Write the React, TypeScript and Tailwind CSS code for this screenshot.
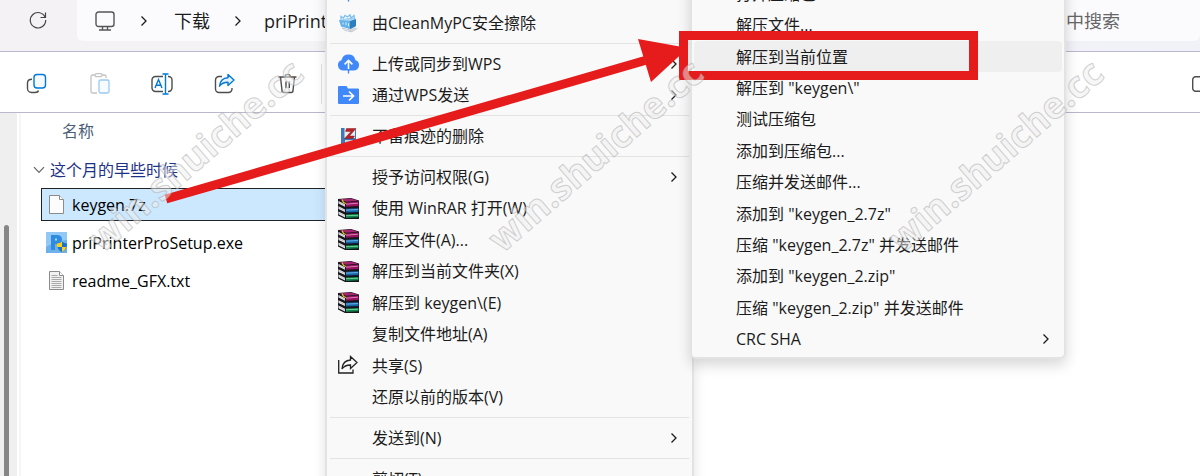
import React from 'react';

type IconName = 'cleaner' | 'cloud' | 'folder' | 'eraser' | 'rar' | 'share';

interface MenuEntry {
  label: string;
  icon?: IconName;
  submenu?: boolean;
}

const MENU_TOP: MenuEntry[] = [
  { label: '上传', icon: 'cloud' },
  { label: '由CleanMyPC安全擦除', icon: 'cleaner' },
];

const MENU_WPS: MenuEntry[] = [
  { label: '上传或同步到WPS', icon: 'cloud', submenu: true },
  { label: '通过WPS发送', icon: 'folder', submenu: true },
];

const MENU_FILE: MenuEntry[] = [
  { label: '授予访问权限(G)', submenu: true },
  { label: '使用 WinRAR 打开(W)', icon: 'rar' },
  { label: '解压文件(A)...', icon: 'rar' },
  { label: '解压到当前文件夹(X)', icon: 'rar' },
  { label: '解压到 keygen\\(E)', icon: 'rar' },
  { label: '复制文件地址(A)' },
  { label: '共享(S)', icon: 'share' },
  { label: '还原以前的版本(V)' },
];

const SUBMENU = [
  '打开压缩包',
  '解压文件...',
  '解压到当前位置',
  '解压到 "keygen\\"',
  '测试压缩包',
  '添加到压缩包...',
  '压缩并发送邮件...',
  '添加到 "keygen_2.7z"',
  '压缩 "keygen_2.7z" 并发送邮件',
  '添加到 "keygen_2.zip"',
  '压缩 "keygen_2.zip" 并发送邮件',
  'CRC SHA',
];

const FILES = [
  { name: 'keygen.7z', kind: 'blank' },
  { name: 'priPrinterProSetup.exe', kind: 'exe' },
  { name: 'readme_GFX.txt', kind: 'txt' },
];

const Chevron: React.FC<{ className?: string }> = ({ className }) => (
  <svg className={className} viewBox="0 0 8 12" fill="none" stroke="currentColor" strokeWidth="1.3">
    <path d="M1.500 1.500 6 6l-4.500 4.500" />
  </svg>
);

const MenuIcon: React.FC<{ name?: IconName }> = ({ name }) => {
  if (name === 'cleaner') {
    return (
      <svg viewBox="0 0 21 21" className="w-[21px] h-[21px]">
        <path d="m7 17 8-3 5 1.500-6 4z" fill="#d3d7da" />
        <path d="M1 7 12 5l6 1v7l-6 3L3 13.500z" fill="#63b1e8" />
        <path d="m12 8 6-2v7l-6 3z" fill="#2a7fc0" />
        <path d="m1 7 11-2 6 1-6 2z" fill="#a9d6f5" />
        <path d="M3 6V3.500L5.500 5 7 2.500 9.500 4 12 2l1 3 3-2.500.500 3.500" stroke="#7cc0ee" strokeWidth="1.400" fill="none" />
        <path d="M5 9.500v2m3-2.300v3m2.500-2v3" stroke="#d7effc" strokeWidth="1" fill="none" />
        <path d="m4 15 7 1.500 2 2-6-1z" fill="#eef2f4" stroke="#9fabb5" strokeWidth=".500" />
      </svg>
    );
  }
  if (name === 'cloud') {
    return (
      <svg viewBox="0 0 21 21" className="w-[21px] h-[21px]">
        <path d="M5.500 17.500A5.400 5.400 0 0 1 3.600 7 7.100 7.100 0 0 1 17.400 7 5.400 5.400 0 0 1 15.500 17.500z" fill="#4189fb" />
        <path d="M10.500 16V8M6.600 11.400l3.900-3.900 3.900 3.900" stroke="#fff" strokeWidth="1.600" fill="none" />
        <path d="M10.500 16.500v4" stroke="#4189fb" strokeWidth="1.400" />
      </svg>
    );
  }
  if (name === 'folder') {
    return (
      <svg viewBox="0 0 21 21" className="w-[21px] h-[21px]">
        <path d="M0 2q0-1 1-1h7.500L10 3.500h10q1 0 1 1V18q0 1-1 1H1q-1 0-1-1z" fill="#4189fb" />
        <path d="M5 11h10.500M11 6.500l4.500 4.500-4.500 4.500" stroke="#fff" strokeWidth="1.700" fill="none" />
      </svg>
    );
  }
  if (name === 'eraser') {
    return (
      <svg viewBox="0 0 21 21" className="w-[21px] h-[21px]">
        <path d="M3 2h14l1 2v14H3z" fill="#3f78b6" />
        <path d="M6.500 2H17v10H6.500z" fill="#e9edf3" />
        <path d="M8.500 2.500H18l-6.500 7.500h5L15 12.500H6.500L13 5.500H7.500z" fill="#b82222" stroke="#7e1212" strokeWidth=".400" />
        <path d="M7 14h8v4H7z" fill="#ccd8e5" />
      </svg>
    );
  }
  if (name === 'rar') {
    return (
      <svg viewBox="0 0 21 21" className="w-[21px] h-[21px]">
        <path d="m0 1 13-1 8 2.500V21H7L0 17.500z" fill="#17151c" />
        <path d="m1 1.500 12-1 7 2.300-12 1z" fill="#a52470" />
        <path d="M8 4.500 20.500 3.500V8L8 8.700z" fill="#97135f" />
        <path d="M8 6.200 20 5.200" stroke="#e388bd" strokeWidth=".900" />
        <path d="M8 10.800 20.500 10.300v3.700L8 14.600z" fill="#1663a9" />
        <path d="M8 12.100 20 11.600" stroke="#73c0ef" strokeWidth=".900" />
        <path d="M8 16.400 20.500 16v3.300L8 20z" fill="#12854f" />
        <path d="M8 17.700 20 17.300" stroke="#71d79d" strokeWidth=".900" />
        <path d="m.500 3 6.500 3.300v2.400L.500 5.500zm0 5.200L7 11.500v2.600L.500 11zm0 5.300L7 16.700v2.800l-6.500-3.200z" fill="#eeecef" />
        <path d="m.500 4.200 6.500 3.300m-6.500 2L7 12.700m-6.500 2L7 18" stroke="#9b979f" strokeWidth=".500" />
        <path d="m4 1.500 1.500 3L8 5.500" stroke="#e0c626" strokeWidth="1.300" fill="none" />
      </svg>
    );
  }
  if (name === 'share') {
    return (
      <svg viewBox="0 0 21 21" className="w-[21px] h-[21px]" fill="none" stroke="#222" strokeWidth="1.300">
        <path d="M.700 5v13H15v-3.500" />
        <path d="M12.500 1.500 19 7.500l-6.500 6V10C8.500 10 6 11 4 14 4.500 8.500 7.500 5.200 12.500 5z" />
      </svg>
    );
  }
  return <span className="w-[21px]" />;
};

const MenuRow: React.FC<{ entry: MenuEntry }> = ({ entry }) => (
  <button type="button" className="w-full flex items-center gap-[13px] pl-[11px] pr-3.5 min-h-0 text-left whitespace-nowrap leading-5">
    <MenuIcon name={entry.icon} />
    <span className="flex-1">{entry.label}</span>
    {entry.submenu && <Chevron className="w-2 h-3" />}
  </button>
);

const Divider = () => <hr className="mx-[3px] my-1 border-0 h-px bg-[#e3e3e3]" />;

const ContextMenu = () => (
  <div className="absolute left-[325px] -top-8 w-[369px] pt-[7px] bg-[#f9f9f9] border-x-2 border-[#e3e3e3] shadow-[0_4px_12px_rgba(0,0,0,0.12)]">
    <div className="grid auto-rows-[32px]">
      {MENU_TOP.map(e => <MenuRow key={e.label} entry={e} />)}
    </div>
    <Divider />
    <div className="grid auto-rows-fr h-[63px]">
      {MENU_WPS.map(e => <MenuRow key={e.label} entry={e} />)}
    </div>
    <Divider />
    <div className="grid auto-rows-[32px]">
      <MenuRow entry={{ label: '不留痕迹的删除', icon: 'eraser' }} />
    </div>
    <Divider />
    <div className="grid auto-rows-fr h-[252px]">
      {MENU_FILE.map(e => <MenuRow key={e.label} entry={e} />)}
    </div>
    <Divider />
    <div className="grid auto-rows-[32px]">
      <MenuRow entry={{ label: '发送到(N)', submenu: true }} />
    </div>
    <Divider />
    <div className="grid auto-rows-[32px]">
      <MenuRow entry={{ label: '剪切(T)' }} />
    </div>
  </div>
);

const ArchiveMenu = () => (
  <div className="absolute left-[690px] -top-6 w-[376px] pb-0.5 bg-[#f9f9f9] border-2 border-[#e3e3e3] rounded-md shadow-[0_6px_14px_rgba(0,0,0,0.16)]">
    <div className="grid auto-rows-fr h-[377px] px-0.5">
      {SUBMENU.map(label => (
        <button key={label} type="button"
          className={`flex items-center justify-between pl-[42px] pr-3 min-h-0 rounded text-left whitespace-nowrap leading-5 ${label === '解压到当前位置' ? 'bg-[#efefef]' : ''}`}>
          <span>{label}</span>
          {label === 'CRC SHA' && <Chevron className="w-2 h-3" />}
        </button>
      ))}
    </div>
  </div>
);

const Toolbar = () => {
  const svg = 'w-[22px] h-[22px]';
  return (
    <div className="flex items-center h-[61px] pt-1 shrink-0 bg-white border-b border-[#b9b8cd] pl-1.5 text-[#4d4d4d]">
      <div className="grid grid-cols-5 w-[313px] justify-items-center">
        <button type="button" aria-label="复制">
          <svg viewBox="0 0 22 22" className={svg} fill="none" strokeWidth="1.400">
            <path d="M6 6.200Q1.500 6.200 1.500 10v5.500a4 4 0 0 0 4 4H9q3 0 3.500-2" stroke="currentColor" />
            <rect x="8" y="1.500" width="11.500" height="13.500" rx="3" stroke="#0078d4" fill="#f4faff" />
          </svg>
        </button>
        <button type="button" aria-label="粘贴">
          <svg viewBox="0 0 22 22" className={svg} fill="none" strokeWidth="1.300">
            <path d="M8 20H3.500a1.500 1.500 0 0 1-1.500-1.500v-15A1.500 1.500 0 0 1 3.500 2H6m7 0h2.500A1.500 1.500 0 0 1 17 3.500V5" stroke="#c4c4c4" />
            <rect x="6" y=".700" width="7" height="3" rx="1.500" stroke="#c4c4c4" />
            <rect x="10" y="7" width="10" height="13" rx="1.500" stroke="#9bcaf0" fill="#f6fbff" />
          </svg>
        </button>
        <button type="button" aria-label="重命名">
          <svg viewBox="0 0 22 22" className={svg} fill="none" strokeWidth="1.400">
            <path d="M12 3.500H4.500a3.500 3.500 0 0 0-3.500 3.500v8a3.500 3.500 0 0 0 3.500 3.500H12M17 3.500h.500a3.500 3.500 0 0 1 3.500 3.500v8a3.500 3.500 0 0 1-3.500 3.500H17" stroke="currentColor" />
            <path d="m4 15 3.500-8.500L11 15M5.200 12.200h4.600M14.500 1v20M11.500 1h6M11.500 21h6" stroke="#0078d4" />
          </svg>
        </button>
        <button type="button" aria-label="共享">
          <svg viewBox="0 0 22 22" className={svg} fill="none" strokeWidth="1.400" strokeLinejoin="round">
            <path d="M8 3.500H5a3.500 3.500 0 0 0-3.500 3.500v9A3.500 3.500 0 0 0 5 19.500h9.500a3.500 3.500 0 0 0 3.500-3.500v-1" stroke="currentColor" />
            <path d="m14 1.500 6 5.500-6 5.500V9.200c-4 0-6.500 1-8.500 4C6 8.500 9 5 14 4.800z" stroke="#0078d4" fill="#e5f3ff" />
          </svg>
        </button>
        <button type="button" aria-label="删除">
          <svg viewBox="0 0 22 22" className={svg} fill="none" stroke="currentColor" strokeWidth="1.400">
            <path d="M1.500 4h18M8 4a2.600 2.600 0 0 1 5.200 0M3.500 4 5 17.500a2 2 0 0 0 2 2h7a2 2 0 0 0 2-2L17.500 4M9 8.500v6.500M12.300 8.500v6.500" />
          </svg>
        </button>
      </div>
      <div className="w-px h-10 ml-0.5 bg-[#e2e2e2]" />
      <button type="button" aria-label="详细信息" className="ml-auto -mr-2">
        <svg viewBox="0 0 16 16" className="w-4 h-4" fill="none" stroke="currentColor" strokeWidth="1.400">
          <rect x=".700" y=".700" width="14.600" height="14.600" rx="3" />
        </svg>
      </button>
    </div>
  );
};

const FileIcon: React.FC<{ kind: string }> = ({ kind }) => {
  if (kind === 'exe') {
    return (
      <svg viewBox="0 0 21 21" className="w-[21px] h-[21px]">
        <rect width="21" height="21" fill="#6db0ea" />
        <path d="M0 0h21v8Q9 9 0 15z" fill="#92c8f5" />
        <path d="M5 3h6q5 0 5 4.500T11 12H9v6H5z" fill="#2f8be0" />
        <path d="M9 6.500h2v2H9z" fill="#a8d7fb" />
        <path d="M11 11.500q3 0 5-2 2 2 5 2 0 6.500-5 8.500-5-2-5-8.500z" fill="#1b72c8" />
        <path d="M16 9.500V15h-4.800q-.400-1.500-.200-3.500 3 0 5-2zM16 15h4.300q-1 3.500-4.300 5z" fill="#f8d21c" />
      </svg>
    );
  }
  return (
    <svg viewBox="0 0 21 21" className="w-[21px] h-[21px]" fill="#fff" stroke="#8b8b8b">
      <path d="M3.500 1.500h10l4 4v14h-14z" fill={kind === 'txt' ? '#f1f1f1' : '#fcfcfc'} />
      <path d="M13.500 1.500v4h4" />
      {kind === 'txt' && <path d="M5.500 5.500h6M5.500 7.500h10M5.500 9.500h10M5.500 11.500h10M5.500 13.500h10M5.500 15.500h10M5.500 17.500h10" stroke="#a9a9a9" />}
    </svg>
  );
};

const watermarkClass = "absolute top-[137px] w-[280px] text-center -rotate-41 text-[37px] leading-9 font-bold whitespace-nowrap text-[#efefef]/50 [-webkit-text-stroke:1px_rgba(165,165,165,0.5)]";

const App: React.FC = () => {
  return (
    <div className="relative flex flex-col h-screen overflow-hidden bg-white text-base text-[#1b1b1b] font-['Open_Sans','Noto_Sans_CJK_SC',sans-serif]">
      {/* Address bar */}
      <header className="flex items-start h-[52px] shrink-0 bg-gradient-to-r from-[#f4f2f4] to-[#f1f2f8] border-b border-[#b9b8cd] text-lg leading-6">
        <button type="button" aria-label="刷新" className="w-[75px] h-10 mr-0.5 flex items-center justify-center text-[#444]">
          <svg viewBox="0 0 18 18" className="w-[18px] h-[18px]" fill="none" stroke="currentColor" strokeWidth="1.200">
            <path d="M16.200 6.500A7.700 7.700 0 1 0 16.700 9M16.500 1.500v5h-5" />
          </svg>
        </button>
        <nav className="flex items-center flex-1 h-[41px] pl-[18px] rounded-b-md bg-[#fbfbfd] whitespace-nowrap">
          <svg viewBox="0 0 20 20" className="w-5 h-5 text-[#555]" fill="none" stroke="currentColor" strokeWidth="1.400">
            <rect x="1" y="1" width="18" height="14.500" rx="2.500" />
            <path d="M7.500 15.500V19m5-3.500V19M4 19h12" />
          </svg>
          <Chevron className="w-2 h-3 ml-[25px]" />
          <button type="button" className="ml-[26px]">下载</button>
          <Chevron className="w-2 h-3 ml-6" />
          <button type="button" className="ml-[22px]">priPrinter</button>
        </nav>
        <input type="search" aria-label="搜索" placeholder="中搜索"
          className="w-[180px] h-[41px] ml-4 pl-[46px] rounded-b-md bg-[#fbfbfd] placeholder:text-[#666] outline-none" />
      </header>

      <Toolbar />

      <div className="flex flex-1 min-h-0">
        <aside className="w-[17px] shrink-0 bg-[#efefef] pl-1 pt-28">
          <div className="w-[5px] h-full rounded-t-full bg-[#868686]" />
        </aside>
        <main className="w-1/2 ml-0.5 pl-3 border-l-2 border-[#f6f6f6]">
          <div className="pl-[29px] pt-2 leading-5 text-[#4c607a]">名称</div>
          <div className="flex items-center gap-[5px] mt-[19px] leading-5 text-[#1e3287]">
            <svg viewBox="0 0 12 8" className="w-3 h-2 text-[#666]" fill="none" stroke="currentColor" strokeWidth="1.200">
              <path d="M1 1.200 6 6.500l5-5.300" />
            </svg>
            <h2>这个月的早些时候</h2>
          </div>
          <ul className="flex flex-col gap-[5px] mt-2 pl-2 text-black">
            {FILES.map((file, i) => (
              <li key={file.name} className={`flex items-center gap-[5px] h-[33px] pl-1 border ${i === 0 ? 'bg-[#cce8ff] border-[#222]' : 'border-transparent'}`}>
                <FileIcon kind={file.kind} />
                <span className="leading-5">{file.name}</span>
              </li>
            ))}
          </ul>
        </main>
      </div>

      <ContextMenu />
      <ArchiveMenu />

      {/* Annotation arrow and frame */}
      <svg className="absolute left-0 top-0 w-[1000px] h-[220px] pointer-events-none" viewBox="0 0 1000 220">
        <path d="M166 199 645 60.500" stroke="#e61c1c" strokeWidth="9" />
        <path d="M638 39 688 48 651 82z" fill="#e61c1c" />
        <rect x="683.500" y="35.500" width="290" height="40" fill="none" stroke="#e61c1c" strokeWidth="9" />
      </svg>

      {/* Watermarks */}
      <div className="pointer-events-none select-none">
        <span className={`${watermarkClass} left-[55px]`}>win.shuiche.cc</span>
        <span className={`${watermarkClass} left-[455px]`}>win.shuiche.cc</span>
        <span className={`${watermarkClass} left-[855px]`}>win.shuiche.cc</span>
      </div>
    </div>
  );
};

export default App;
